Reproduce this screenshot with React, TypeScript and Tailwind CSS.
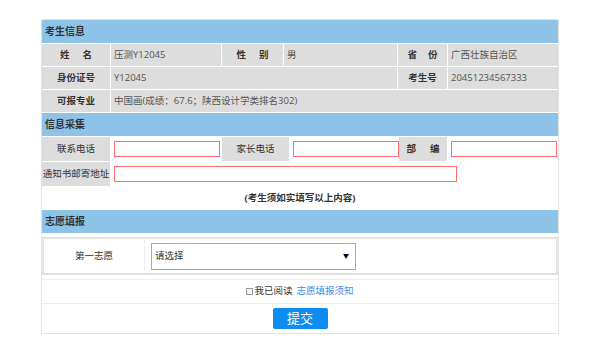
import React from "react";

const FONT = { fontFamily: '"Open Sans", "Noto Sans CJK SC", sans-serif' };

function SectionHead({ title }: { title: string }) {
  return (
    <div className="h-[23px] bg-[#8dc3e7] flex items-center pl-[3px] text-[10px] font-bold text-[#333]">
      {title}
    </div>
  );
}

function Label({ w, children }: { w: string; children: React.ReactNode }) {
  return (
    <div className={`${w} shrink-0 bg-[#dddddd] flex items-center justify-center font-bold text-[#333] whitespace-nowrap`}>
      {children}
    </div>
  );
}

// two characters spread apart, e.g. 姓  名
function Spread({ a, b, gap }: { a: string; b: string; gap: string }) {
  return (
    <span className={`flex ${gap}`}>
      <span>{a}</span>
      <span>{b}</span>
    </span>
  );
}

function Value({ w, children }: { w: string; children: React.ReactNode }) {
  return <div className={`${w} shrink-0 bg-[#dddddd] flex items-center pl-[3px] text-[#555] whitespace-nowrap`}>{children}</div>;
}

function Field({ w, iw }: { w: string; iw: string }) {
  return (
    <div className={`${w} shrink-0 bg-white flex items-center`}>
      <input className={`${iw} ml-[3px] h-[16px] border border-[#ff6b6b] outline-none bg-white`} />
    </div>
  );
}

export default function App() {
  return (
    <div className="min-h-screen bg-white pt-[19px] pl-[41px] text-[9.5px]" style={FONT}>
      <div className="w-[518px] border border-[#e4e4e4] bg-white">
        {/* 考生信息 */}
        <SectionHead title="考生信息" />
        <div className="flex flex-col gap-px pt-px">
          <div className="flex gap-px h-[22px]">
            <Label w="w-[68px]"><Spread a="姓" b="名" gap="gap-[13px]" /></Label>
            <Value w="w-[110px]">压测Y12045</Value>
            <Label w="w-[61px]"><Spread a="性" b="别" gap="gap-[13px]" /></Label>
            <Value w="w-[113px]">男</Value>
            <Label w="w-[49px]"><Spread a="省" b="份" gap="gap-[11px]" /></Label>
            <Value w="w-[110px]">广西壮族自治区</Value>
          </div>
          <div className="flex gap-px h-[22px]">
            <Label w="w-[68px]">身份证号</Label>
            <Value w="w-[286px]">Y12045</Value>
            <Label w="w-[49px]">考生号</Label>
            <Value w="w-[110px]">20451234567333</Value>
          </div>
          <div className="flex gap-px h-[22px]">
            <Label w="w-[68px]">可报专业</Label>
            <Value w="w-[447px]">中国画(成绩：67.6；陕西设计学类排名302)</Value>
          </div>
        </div>

        {/* 信息采集 */}
        <div className="pt-px">
          <SectionHead title="信息采集" />
        </div>
        <div className="flex flex-col gap-px pt-px">
          <div className="flex gap-px h-[24px]">
            <Label w="w-[68px]"><span className="font-normal">联系电话</span></Label>
            <Field w="w-[110px]" iw="w-[106px]" />
            <Label w="w-[67px]"><span className="font-normal">家长电话</span></Label>
            <Field w="w-[108px]" iw="w-[106px]" />
            <Label w="w-[48px]"><Spread a="部" b="编" gap="gap-[14px]" /></Label>
            <Field w="w-[110px]" iw="w-[106px]" />
          </div>
          <div className="flex gap-px h-[24px]">
            <div className="w-[68px] shrink-0 bg-[#dddddd] flex items-center justify-center text-[#333] whitespace-nowrap">通知书邮寄地址</div>
            <Field w="w-[447px]" iw="w-[343px]" />
          </div>
          <div className="h-[23px] flex items-center justify-center font-bold text-[#333]">
            (考生须如实填写以上内容)
          </div>
        </div>

        {/* 志愿填报 */}
        <SectionHead title="志愿填报" />
        <div className="pt-[4px] pb-[4px]">
          <div className="flex h-[38px] border-2 border-[#e2e2e2]">
            <div className="w-[101px] shrink-0 flex items-center justify-center text-[#333] border-r border-[#eeeeee]">第一志愿</div>
            <div className="flex items-center pl-[6px]">
              <div className="w-[205px] h-[27px] border border-[#aaaaaa] flex items-center justify-between pl-[3px] pr-[6px] text-[#333]">
                <span>请选择</span>
                <span className="text-[6px] text-black">▼</span>
              </div>
            </div>
          </div>
        </div>
        <div className="h-[24px] border-t border-[#eeeeee] flex items-center justify-center text-[#333]">
          <span className="w-[7px] h-[7px] border border-[#999] bg-[#f3f3f3] mr-px" />
          <span>我已阅读</span>
          <span className="ml-[4px] text-[#3a8fe8]">志愿填报须知</span>
        </div>
        <div className="h-[30px] border-t border-[#eeeeee] flex items-center justify-center">
          <div className="w-[55px] h-[21px] bg-[#0d8cf2] rounded-[2px] flex items-center justify-center text-white text-[13px]">
            提交
          </div>
        </div>
      </div>
    </div>
  );
}
